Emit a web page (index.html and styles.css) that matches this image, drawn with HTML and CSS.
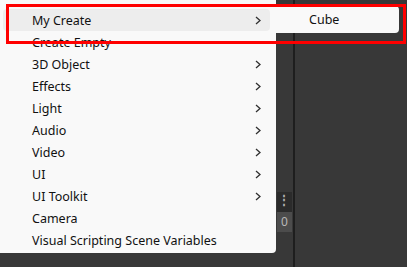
FILE: index.html
```html
<!DOCTYPE html>
<html lang="en">
<head>
  <meta charset="UTF-8" />
  <title>Create Menu</title>
  <link rel="stylesheet" href="styles.css">
</head>
<body>

  <!-- Context menu -->
  <div class="menu">
    <div class="item active"><span>My Create</span><svg class="chev" viewBox="0 0 6 9"><polyline points="1,1 5,4.5 1,8"/></svg></div>
    <div class="item"><span>Create Empty</span></div>
    <div class="item"><span>3D Object</span><svg class="chev" viewBox="0 0 6 9"><polyline points="1,1 5,4.5 1,8"/></svg></div>
    <div class="item"><span>Effects</span><svg class="chev" viewBox="0 0 6 9"><polyline points="1,1 5,4.5 1,8"/></svg></div>
    <div class="item"><span>Light</span><svg class="chev" viewBox="0 0 6 9"><polyline points="1,1 5,4.5 1,8"/></svg></div>
    <div class="item"><span>Audio</span><svg class="chev" viewBox="0 0 6 9"><polyline points="1,1 5,4.5 1,8"/></svg></div>
    <div class="item"><span>Video</span><svg class="chev" viewBox="0 0 6 9"><polyline points="1,1 5,4.5 1,8"/></svg></div>
    <div class="item"><span>UI</span><svg class="chev" viewBox="0 0 6 9"><polyline points="1,1 5,4.5 1,8"/></svg></div>
    <div class="item"><span>UI Toolkit</span><svg class="chev" viewBox="0 0 6 9"><polyline points="1,1 5,4.5 1,8"/></svg></div>
    <div class="item"><span>Camera</span></div>
    <div class="item"><span>Visual Scripting Scene Variables</span></div>
  </div>

  <!-- Strip behind the menu -->
  <div class="strip">
    <div class="strip-head">⋮</div>
    <div class="strip-num">0</div>
  </div>
  <div class="divider"></div>
  <div class="rest"></div>

  <!-- Submenu popup -->
  <div class="submenu">Cube</div>

  <!-- Annotation frame -->
  <div class="mark"></div>

</body>
</html>
```

FILE: styles.css
```css
* {
  box-sizing: border-box;
  margin: 0;
  padding: 0;
}

body {
  width: 407px;
  height: 267px;
  overflow: hidden;
  background: #383838;
  display: flex;
  align-items: flex-start;
  font-family: 'Noto Sans', 'Noto Sans CJK SC', sans-serif;
  font-size: 12.5px;
  color: #111111;
  position: relative;
}

.menu {
  width: 276px;
  height: 253px;
  flex-shrink: 0;
  background: #f9f9f9;
  border-bottom-right-radius: 4px;
  padding: 9px 6px 2px 3px;
}

.item {
  height: 22px;
  display: flex;
  align-items: center;
  justify-content: space-between;
  padding: 1px 9px 0 29px;
  border-radius: 4px;
}

.item.active {
  background: #ededed;
}

.chev {
  width: 6px;
  height: 9px;
  fill: none;
  stroke: #303030;
  stroke-width: 1.3;
}

.strip {
  width: 17px;
  flex-shrink: 0;
  padding: 192px 1px 0 1px;
}

.strip-head {
  height: 20px;
  background: #2b2b2b;
  color: #b0b0b0;
  font-size: 12px;
  font-weight: bold;
  line-height: 16px;
  padding-left: 1px;
}

.strip-num {
  height: 20px;
  background: #4c4c4c;
  color: #b8b8b8;
  font-size: 12px;
  line-height: 20px;
  text-align: center;
}

.divider {
  width: 2px;
  height: 267px;
  flex-shrink: 0;
  background: #1e1e1e;
}

.rest {
  flex: 1;
}

.submenu {
  position: absolute;
  left: 272px;
  top: 6px;
  width: 127px;
  height: 27px;
  background: #f9f9f9;
  border-radius: 4px;
  padding-left: 37px;
  line-height: 28px;
}

.mark {
  position: absolute;
  left: 6px;
  top: 4px;
  width: 400px;
  height: 40px;
  border: 3px solid #ff0000;
}
```
